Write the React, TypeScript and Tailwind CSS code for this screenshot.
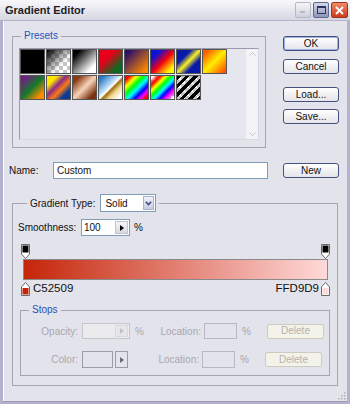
import React from 'react';

const checker =
  'bg-[conic-gradient(#c4c4c4_25%,#ffffff_0_50%,#c4c4c4_0_75%,#ffffff_0)] bg-[length:8px_8px]';

type Swatch = { c: string; checker?: boolean };

const presetsRow1: Swatch[] = [
  { c: 'bg-black' },
  { c: 'bg-[linear-gradient(135deg,#000_0%,rgba(0,0,0,0)_65%)]', checker: true },
  { c: 'bg-[linear-gradient(135deg,#000_15%,#fff_80%)]' },
  { c: 'bg-[linear-gradient(135deg,#e8001a_35%,#0b6a22_80%)]' },
  { c: 'bg-[linear-gradient(135deg,#2a0d6a_10%,#ff8a00_90%)]' },
  { c: 'bg-[linear-gradient(135deg,#0a12d8_20%,#f40010_52%,#fff600_85%)]' },
  { c: 'bg-[linear-gradient(135deg,#0a1aa8_30%,#f8f020_50%,#0a1aa8_70%)]' },
  { c: 'bg-[linear-gradient(135deg,#ff5a00_10%,#ffee00_50%,#ff5a00_92%)]' },
];

const presetsRow2: Swatch[] = [
  { c: 'bg-[linear-gradient(135deg,#7a1a8a_10%,#127a2a_50%,#ff8a00_85%)]' },
  { c: 'bg-[linear-gradient(135deg,#ffe600_22%,#8a2a8a_42%,#ff7a10_60%,#0a3a9a_80%)]' },
  { c: 'bg-[linear-gradient(135deg,#8a3a14_15%,#f6d4b8_50%,#7a3210_85%)]' },
  { c: 'bg-[linear-gradient(135deg,#2878c8_10%,#cfe8fa_45%,#ffffff_50%,#a0700c_56%,#f0d890_70%,#ffffff_90%)]' },
  { c: 'bg-[linear-gradient(135deg,#ff0000_10%,#ffff00_25%,#00ff00_40%,#00ffff_55%,#0000ff_70%,#ff00ff_82%,#ff0000_92%)]' },
  {
    c: 'bg-[linear-gradient(135deg,rgba(255,0,0,0)_5%,#ff0000_20%,#ffff00_32%,#00ff00_44%,#00ffff_56%,#0000ff_68%,#ff00ff_80%,rgba(255,0,255,0)_95%)]',
    checker: true,
  },
  { c: 'bg-[repeating-linear-gradient(135deg,#000_0_3px,rgba(0,0,0,0)_3px_6px)]', checker: true },
];

function SwatchBox({ s }: { s: Swatch }) {
  return (
    <div className={`w-[25px] h-[25px] border border-[#555] ${s.checker ? checker : ''}`}>
      <div className={`w-full h-full ${s.c}`} />
    </div>
  );
}

function Btn({ label, def, w = 'w-[56px]' }: { label: string; def?: boolean; w?: string }) {
  return (
    <button
      className={`${w} h-[15px] rounded-[3px] border border-[#47507a] bg-[linear-gradient(#ffffff,#e4e4ea)] text-[10px] leading-none text-[#111] flex items-center justify-center ${
        def ? 'shadow-[inset_0_0_0_1px_#9db4e8]' : ''
      }`}
    >
      {label}
    </button>
  );
}

function DisabledBtn() {
  return (
    <button className="w-[57px] h-[15px] rounded-[2px] border border-[#cbcbc0] bg-[#f3f3ea] text-[10px] leading-none text-[#b2b2aa] flex items-center justify-center">
      Delete
    </button>
  );
}

function RightArrow({ color = '#000' }: { color?: string }) {
  return (
    <svg width="4" height="6" viewBox="0 0 4 6">
      <path d="M0 0L4 3L0 6Z" fill={color} />
    </svg>
  );
}

function TopStop() {
  return (
    <svg width="9" height="15" viewBox="0 0 9 15">
      <path d="M0.5 0.5H8.5V10L4.5 14.5L0.5 10Z" fill="#fff" stroke="#6a6a6a" />
      <rect x="1.5" y="1.5" width="6" height="7" fill="#000" />
    </svg>
  );
}

function BottomStop({ color }: { color: string }) {
  return (
    <svg width="9" height="14" viewBox="0 0 9 14">
      <path d="M4.5 0.5L8.5 5V13.5H0.5V5Z" fill="#fff" stroke="#6a6a6a" />
      <rect x="1.5" y="6" width="6" height="6.5" fill={color} />
    </svg>
  );
}

export default function App() {
  return (
    <div className="w-[350px] h-[404px] bg-[#b3b1cf] flex flex-col font-['Liberation_Sans',Arial,sans-serif] text-[10px] text-[#111]">
      {/* title bar */}
      <div className="h-[21px] flex items-center pl-[5px] pr-[2px] bg-[linear-gradient(#f8f8fb,#d6d6e2)] border-b border-[#b4b4c6]">
        <span className="text-[11px] font-bold text-[#1e1e24]">Gradient Editor</span>
        <div className="ml-auto flex gap-[2px]">
          <div className="w-[16px] h-[16px] rounded-[2px] border border-[#b6b6c6] bg-[linear-gradient(#f6f6f8,#cfcfdc)] flex items-end pl-[4px] pb-[4px]">
            <div className="w-[5px] h-[2px] bg-[#b8b8c4]" />
          </div>
          <div className="w-[16px] h-[16px] rounded-[2px] border border-[#5e6890] bg-[linear-gradient(#d4d8ea,#8e96b8)] flex items-center justify-center">
            <div className="w-[9px] h-[8px] border border-[#2a3560] border-t-2" />
          </div>
          <div className="w-[17px] h-[16px] rounded-[2px] border border-[#9c3420] bg-[linear-gradient(#ee8a6a,#cc3a1c)] flex items-center justify-center">
            <svg width="9" height="9" viewBox="0 0 9 9">
              <path d="M1 1L8 8M8 1L1 8" stroke="#fff" strokeWidth="1.8" />
            </svg>
          </div>
        </div>
      </div>

      {/* body */}
      <div className="flex-1 mx-[3px] mb-[2px] bg-[#e3e3eb] shadow-[inset_1px_0_0_#fff] border-b border-[#9c9cb0] flex flex-col">
        <div className="flex mt-[9px]">
          <fieldset className="ml-[9px] w-[254px] border border-[#a4a4b4] px-[6px] pt-[6px] pb-[7px]">
            <legend className="ml-[2px] px-[3px] leading-[12px] text-[#2a52b6] bg-[#e3e3eb]">Presets</legend>
            <div className="h-[92px] w-[240px] border border-[#9a9aac] border-r-[#d8d8e2] border-b-[#d8d8e2] bg-[#e6e6ee] flex">
              <div className="flex-1 flex flex-col gap-[1px]">
                <div className="flex gap-[1px]">
                  {presetsRow1.map((s, i) => (
                    <SwatchBox key={i} s={s} />
                  ))}
                </div>
                <div className="flex gap-[1px]">
                  {presetsRow2.map((s, i) => (
                    <SwatchBox key={i} s={s} />
                  ))}
                </div>
              </div>
              <div className="w-[12px] bg-[#f3f3f7] flex flex-col justify-between items-center py-[3px]">
                <svg width="7" height="4" viewBox="0 0 7 4">
                  <path d="M0.5 3.5L3.5 0.5L6.5 3.5" fill="none" stroke="#c4c4cc" />
                </svg>
                <svg width="7" height="4" viewBox="0 0 7 4">
                  <path d="M0.5 0.5L3.5 3.5L6.5 0.5" fill="none" stroke="#c4c4cc" />
                </svg>
              </div>
            </div>
          </fieldset>
          <div className="ml-[17px] mt-[6px] flex flex-col">
            <Btn label="OK" def />
            <div className="mt-[8px]">
              <Btn label="Cancel" />
            </div>
            <div className="mt-[13px]">
              <Btn label="Load..." />
            </div>
            <div className="mt-[7px]">
              <Btn label="Save..." />
            </div>
          </div>
        </div>

        {/* name row */}
        <div className="flex items-center h-[17px] mt-[14px]">
          <span className="ml-[6px] w-[44px]">Name:</span>
          <div className="w-[215px] h-[17px] border border-[#7f9db9] bg-white pl-[3px] flex items-center">Custom</div>
          <div className="ml-[15px]">
            <Btn label="New" />
          </div>
        </div>

        {/* gradient group */}
        <fieldset className="mt-[15px] ml-[9px] w-[326px] border border-[#a4a4b4] pl-[5px] pr-[6px] pt-[7px] pb-[9px]">
          <legend className="ml-[9px] px-[3px] bg-[#e3e3eb]">
            <div className="flex items-center">
              <span>Gradient Type:</span>
              <div className="ml-[5px] w-[56px] h-[18px] border border-[#7f9db9] bg-white flex items-center">
                <span className="pl-[4px] flex-1">Solid</span>
                <div className="w-[11px] h-[14px] mr-[1px] border border-[#aab2cc] bg-[linear-gradient(#f0f2fa,#c6cbe0)] flex items-center justify-center">
                  <svg width="7" height="5" viewBox="0 0 7 5">
                    <path d="M0.8 0.8L3.5 3.6L6.2 0.8" fill="none" stroke="#3a4a7a" strokeWidth="1.5" />
                  </svg>
                </div>
              </div>
            </div>
          </legend>

          <div className="flex items-center h-[17px]">
            <span className="w-[63px]">Smoothness:</span>
            <div className="w-[49px] h-[17px] border border-[#7f9db9] bg-white flex">
              <span className="flex-1 pl-[2px] flex items-center">100</span>
              <div className="w-[13px] my-[1px] mr-[1px] bg-[linear-gradient(#f4f4f8,#d8d8e2)] border border-[#c4c4d0] flex items-center justify-center">
                <RightArrow />
              </div>
            </div>
            <span className="ml-[4px]">%</span>
          </div>

          {/* gradient bar */}
          <div className="mt-[8px] ml-[2px] w-[311px]">
            <div className="flex justify-between px-[1px] h-[15px]">
              <TopStop />
              <TopStop />
            </div>
            <div className="mx-[3px] h-[21px] border border-[#8a8a8a] bg-[linear-gradient(to_right,#C52509,#FFD9D9)]" />
            <div className="mt-[2px] h-[14px] flex items-center px-[1px]">
              <BottomStop color="#C52509" />
              <span className="ml-[3px] text-[11.5px] leading-none">C52509</span>
              <span className="ml-auto mr-[2px] text-[11.5px] leading-none">FFD9D9</span>
              <BottomStop color="#FFD9D9" />
            </div>
          </div>

          {/* stops group */}
          <fieldset className="mt-[8px] ml-[2px] w-[310px] border border-[#a4a4b4] pt-[7px] pb-[7px]">
            <legend className="ml-[8px] px-[3px] leading-[12px] text-[#2a52b6] bg-[#e3e3eb]">Stops</legend>
            <div className="flex items-center h-[16px] text-[#a8a8b0]">
              <span className="w-[57px] text-right">Opacity:</span>
              <div className="ml-[4px] w-[48px] h-[16px] border border-[#c6c6ce] bg-[#ebebee] flex justify-end">
                <div className="w-[13px] my-[1px] mr-[1px] bg-[#e6e6ea] border border-[#d8d8de] flex items-center justify-center">
                  <RightArrow color="#c0c0c8" />
                </div>
              </div>
              <span className="ml-[5px] w-[10px]">%</span>
              <span className="w-[56px] text-right">Location:</span>
              <div className="ml-[3px] w-[33px] h-[16px] border border-[#b8b8c2]" />
              <span className="ml-[5px] w-[10px]">%</span>
              <div className="ml-[15px]">
                <DisabledBtn />
              </div>
            </div>
            <div className="flex items-center h-[17px] mt-[12px] text-[#a8a8b0]">
              <span className="w-[57px] text-right">Color:</span>
              <div className="ml-[4px] w-[31px] h-[17px] border border-[#9c9ca8]" />
              <div className="ml-[2px] w-[13px] h-[17px] border border-[#9c9ca8] flex items-center justify-center">
                <RightArrow color="#6a6a72" />
              </div>
              <span className="ml-[5px] w-[10px]" />
              <span className="w-[56px] text-right">Location:</span>
              <div className="ml-[3px] w-[33px] h-[17px] border border-[#b8b8c2]" />
              <span className="ml-[5px] w-[10px]">%</span>
              <div className="ml-[15px]">
                <DisabledBtn />
              </div>
            </div>
          </fieldset>
        </fieldset>

        <div className="flex-1 flex items-end justify-end pr-[1px] pb-[1px]">
          <svg width="9" height="9" viewBox="0 0 9 9">
            <rect x="7" y="1" width="1.5" height="1.5" fill="#b0b0bc" />
            <rect x="4" y="4" width="1.5" height="1.5" fill="#b0b0bc" />
            <rect x="7" y="4" width="1.5" height="1.5" fill="#b0b0bc" />
            <rect x="1" y="7" width="1.5" height="1.5" fill="#b0b0bc" />
            <rect x="4" y="7" width="1.5" height="1.5" fill="#b0b0bc" />
            <rect x="7" y="7" width="1.5" height="1.5" fill="#b0b0bc" />
          </svg>
        </div>
      </div>
    </div>
  );
}
